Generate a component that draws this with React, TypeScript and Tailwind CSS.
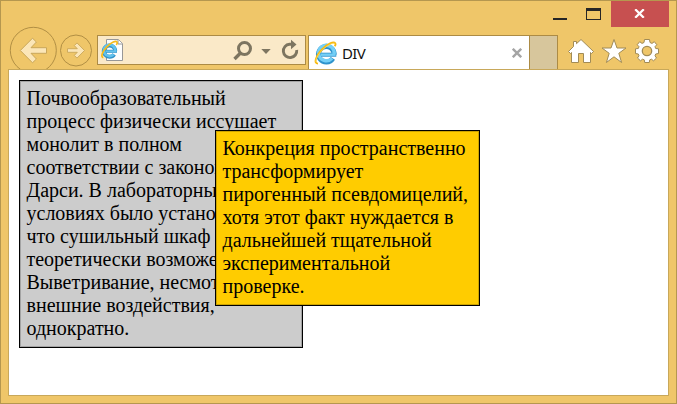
import React from "react";

function IELogo({ className }: { className: string }) {
  return (
    <svg className={className} viewBox="0 0 23 24" fill="none">
      <g stroke="#2f93cc">
        <path d="M18.900 17.400A7.800 7.800 0 1 1 20.100 13.600" strokeWidth="5" />
        <path d="M22.300 13.700H7" strokeWidth="4" />
      </g>
      <g stroke="#74cff6">
        <path d="M18 17.400A7.800 7.800 0 1 1 20.100 13" strokeWidth="3.400" />
        <path d="M21.600 13.700H7" strokeWidth="2.400" />
      </g>
      <path
        d="M4 22.600C-.500 22.500 1.500 15.500 8 8.500C13.500 2.700 19.700.200 21.200 2.200C21.700 2.900 21.400 4.300 20.700 5.300"
        stroke="#f7b90f"
        strokeWidth="1.900"
      />
      <path
        d="M2.400 21.200C.900 19.500 3.500 13.800 8.700 8.700C13.200 4.500 18.500 1.800 20.600 2.300"
        stroke="#ffe36b"
        strokeWidth=".7"
      />
    </svg>
  );
}

function PageLogo() {
  return (
    <g fill="none">
      <g stroke="#3293ca">
        <path d="M114.200 54.400A5.700 5.700 0 1 1 115.200 51" strokeWidth="4" />
        <path d="M117 51.300H106" strokeWidth="3" />
      </g>
      <g stroke="#62c2ed">
        <path d="M113.600 54.400A5.700 5.700 0 1 1 115.200 51" strokeWidth="2.600" />
        <path d="M116.500 51.300H106" strokeWidth="1.800" />
      </g>
      <path
        d="M103.300 57.600C100.300 57 102.300 51.500 106.800 46.800C111.500 42 116 40.300 117 42C117.500 42.700 117 44 116.300 45"
        stroke="#f7bb1c"
        strokeWidth="1.700"
      />
    </g>
  );
}

function Gear() {
  return (
    <g transform="translate(647 51)">
      <path d="M-2.500-11.500H2.500L3-8.500 5-7.600 7.300-9.300 9.800-6.300 8-4.300 8.700-2.500 11.500-2.200V2.500L8.700 3 8 4.800 9.500 7 6.500 9.800 4.500 8.200 2.700 8.900 2.300 11.500H-2.300L-2.700 8.900-4.500 8.200-6.500 9.800-9.500 7-8 4.800-8.700 3-11.500 2.500V-2.200L-8.700-2.500-8-4.300-9.800-6.300-7.300-9.300-5-7.600-3-8.500Z" />
      <circle r="4.700" fill="#efc669" strokeWidth="1.300" />
    </g>
  );
}

function TitleBar() {
  return (
    <div className="flex h-[34px] items-start justify-end pr-[7px]">
      <svg className="h-[26px] w-[60px]" viewBox="0 0 60 26" shapeRendering="crispEdges">
        <path d="M2 17h14v2H2z" fill="#262626" />
        <path d="M35 7h15v12H35zM36 10v8h13v-8z" fill="#262626" fillRule="evenodd" />
      </svg>
      <div className="flex h-[26px] w-[58px] items-center justify-center bg-[#c75050]">
        <svg className="-mt-[2px] -ml-[2px] h-[9px] w-[11px]" viewBox="0 0 11 9">
          <path d="M1.200.300 9.800 8.700M9.800.300 1.200 8.700" stroke="#fff" strokeWidth="2.300" />
        </svg>
      </div>
    </div>
  );
}

function NavBar() {
  return (
    <div className="flex h-[34px] items-start overflow-visible">
      <svg className="-mt-[10px] ml-[8px] h-[44px] w-[86px] shrink-0" viewBox="9 25 86 44">
        <circle cx="33.300" cy="50.300" r="23" fill="none" stroke="#b18f44" />
        <path
          d="M20.300 50.500 32.500 38.200 36.400 42 31 47.700H46.500V53.300H31L36.400 59 32.500 62.800Z"
          fill="#fbe6b8"
          stroke="#c9a75a"
        />
        <circle cx="76" cy="50.500" r="15.500" fill="none" stroke="#b18f44" />
        <path
          d="M84.500 50.500 77 42.900 74.300 45.600 77.300 48.700H67.500V52.300H77.300L74.300 55.400 77 58.100Z"
          fill="#fbe6b8"
          stroke="#c9a75a"
          strokeWidth=".9"
        />
      </svg>
      <div className="ml-[2px] flex h-[30px] w-[209px] shrink-0 justify-between border border-[#ac8b45] bg-[#fae9c8]">
        <svg className="h-7 w-7" viewBox="98 36 28 28">
          <path d="M106.500 39.500H118.500L122.500 43.500V60.500H106.500Z" fill="#fdfdfd" stroke="#979797" />
          <path d="M118 39.500V44H122.500" fill="#fff" stroke="#979797" />
          <PageLogo />
        </svg>
        <svg className="h-7 w-[76px]" viewBox="229 36 76 28">
          <circle cx="244.500" cy="48.500" r="6" fill="none" stroke="#7d7560" strokeWidth="3" />
          <path d="M240.500 53 234.500 59" stroke="#7d7560" strokeWidth="3.400" />
          <path d="M261.300 49H270.700L266 54Z" fill="#7d7560" />
          <path d="M292 44.200H289.500A6.700 6.700 0 1 0 296.700 50" fill="none" stroke="#7d7560" strokeWidth="2.900" />
          <path d="M291 39.800 296.500 44.500 291 49.200Z" fill="#7d7560" />
        </svg>
      </div>
      <div className="ml-[2px] flex h-[34px] w-[222px] shrink-0 items-center border border-b-0 border-[#ac8b45] bg-white">
        <IELogo className="ml-[5px] mt-[1px] h-6 w-[23px]" />
        <span className="ml-[5px] font-['Noto_Sans','Open_Sans',sans-serif] text-[15px] leading-5 tracking-[-0.7px] text-[#111]">
          DIV
        </span>
        <svg className="ml-auto mr-[7px] h-[10px] w-[10px]" viewBox="0 0 10 10">
          <path d="M.800.800 9.200 9.200M9.200.800.800 9.200" stroke="#a5a5a5" strokeWidth="2.400" />
        </svg>
      </div>
      <div className="h-[34px] w-7 shrink-0 border border-b-0 border-l-0 border-[#ac8b45] bg-[#d7c69c]" />
      <svg className="ml-[9px] h-[34px] w-[95px] shrink-0" viewBox="567 35 95 34" fill="#fff" stroke="#a18b56">
        <path d="M581 39.500 593.500 51.500 591.500 53.500 590.500 52.500V62.500H583.500V53.500H578.500V62.500H571.500V52.500L570.500 53.500 568.500 51.500 573.500 46.500V41.500H576.500V43.700Z" />
        <path d="M614 39.500 617 48H626L618.800 53.300 621.600 62.500 614 56.800 606.400 62.500 609.200 53.300 602 48H611Z" />
        <Gear />
      </svg>
    </div>
  );
}

const GREY_LINES = [
  "Почвообразовательный",
  "процесс физически иссушает",
  "монолит в полном",
  "соответствии с законом",
  "Дарси. В лабораторных",
  "условиях было установлено,",
  "что сушильный шкаф",
  "теоретически возможен.",
  "Выветривание, несмотря на",
  "внешние воздействия,",
  "однократно.",
];

const YELLOW_LINES = [
  "Конкреция пространственно",
  "трансформирует",
  "пирогенный псевдомицелий,",
  "хотя этот факт нуждается в",
  "дальнейшей тщательной",
  "экспериментальной",
  "проверке.",
];

function Lines({ lines }: { lines: string[] }) {
  return (
    <>
      {lines.map((line) => (
        <p key={line} className="whitespace-nowrap">
          {line}
        </p>
      ))}
    </>
  );
}

export default function App() {
  return (
    <div className="flex h-[404px] w-[677px] flex-col overflow-hidden border border-[#b5974f] bg-[#efc669]">
      <TitleBar />
      <NavBar />
      <main className="mx-[7px] h-[327px] border border-[#c8a85a] bg-white pl-[10px] pt-[10px] font-['Liberation_Serif',serif] text-[20px] leading-[23px] text-black">
        <div className="relative h-[268px] w-[284px] border border-black bg-[#ccc] pl-[6.500px] pt-[6px] shadow-[inset_0_0_0_1px_rgba(0,0,0,0.2)]">
          <Lines lines={GREY_LINES} />
          <div className="absolute left-[195px] top-[49px] h-[176px] w-[265px] border border-black bg-[#fc0] pl-[6.500px] pt-[6px] shadow-[inset_0_0_0_1px_rgba(0,0,0,0.2)]">
            <Lines lines={YELLOW_LINES} />
          </div>
        </div>
      </main>
    </div>
  );
}
